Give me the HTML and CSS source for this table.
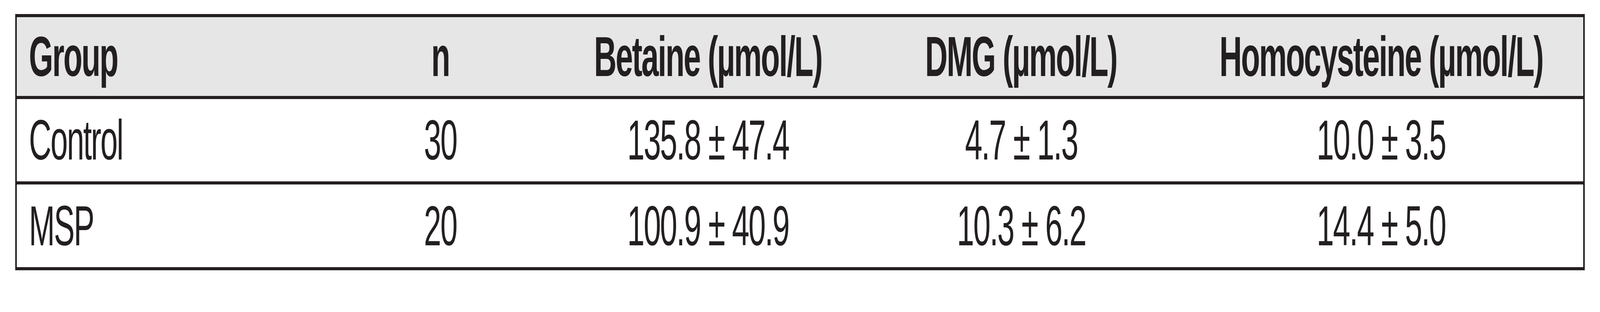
FILE: index.html
```html
<!DOCTYPE html>
<html lang="en">
<head>
<meta charset="utf-8">
<title>Betaine, DMG and Homocysteine by group</title>
<link rel="stylesheet" href="styles.css">
</head>
<body>
<div class="data-table" role="table">
  <div class="row head-row" role="row">
    <div class="cell cell-left" role="columnheader"><span class="txt">Group</span></div>
    <div class="cell" role="columnheader"><span class="txt">n</span></div>
    <div class="cell" role="columnheader"><span class="txt">Betaine (µmol/L)</span></div>
    <div class="cell" role="columnheader"><span class="txt">DMG (µmol/L)</span></div>
    <div class="cell" role="columnheader"><span class="txt">Homocysteine (µmol/L)</span></div>
  </div>
  <div class="row body-row row-first" role="row">
    <div class="cell cell-left" role="cell"><span class="txt">Control</span></div>
    <div class="cell" role="cell"><span class="txt">30</span></div>
    <div class="cell" role="cell"><span class="txt">135.8 ± 47.4</span></div>
    <div class="cell" role="cell"><span class="txt">4.7 ± 1.3</span></div>
    <div class="cell" role="cell"><span class="txt">10.0 ± 3.5</span></div>
  </div>
  <div class="row body-row row-last" role="row">
    <div class="cell cell-left" role="cell"><span class="txt">MSP</span></div>
    <div class="cell" role="cell"><span class="txt">20</span></div>
    <div class="cell" role="cell"><span class="txt">100.9 ± 40.9</span></div>
    <div class="cell" role="cell"><span class="txt">10.3 ± 6.2</span></div>
    <div class="cell" role="cell"><span class="txt">14.4 ± 5.0</span></div>
  </div>
</div>
</body>
</html>
```
FILE: styles.css
```css
:root {
  --sx: 1;
  --ink: #231f20;
}

@media (max-width: 4096px) {
  :root { --sx: 0.5508; }
}

html, body {
  margin: 0;
  padding: 0;
  background: #ffffff;
}

body {
  padding-top: 36px;
  font-family: "Liberation Sans", Arial, Helvetica, sans-serif;
  color: var(--ink);
}

.data-table {
  margin-left: 0.9413vw;
  width: 98.104vw;
  box-sizing: border-box;
  border-top: 8px solid var(--ink);
  border-bottom: 8px solid var(--ink);
  border-left: 0.1076vw solid var(--ink);
  border-right: 0.1076vw solid var(--ink);
}

.row {
  display: grid;
  grid-template-columns: 19.443vw 14.092vw 19.363vw 19.766vw 1fr;
}

.head-row {
  height: 202px;
  background: #e6e6e6;
  border-bottom: 8px solid var(--ink);
  font-weight: 700;
}

.row-first {
  height: 211px;
  border-bottom: 8px solid var(--ink);
}

.row-last {
  height: 212px;
}

.body-row {
  font-weight: 400;
}

.cell {
  display: flex;
  align-items: center;
  justify-content: center;
  min-width: 0;
}

.cell-left {
  justify-content: flex-start;
  padding-left: 0.78vw;
}

.txt {
  flex: none;
  display: block;
  font-size: 145px;
  line-height: 1;
  letter-spacing: -4.5px;
  white-space: nowrap;
  transform: scaleX(var(--sx));
  transform-origin: center center;
}

.cell-left .txt {
  transform-origin: left center;
}
```
